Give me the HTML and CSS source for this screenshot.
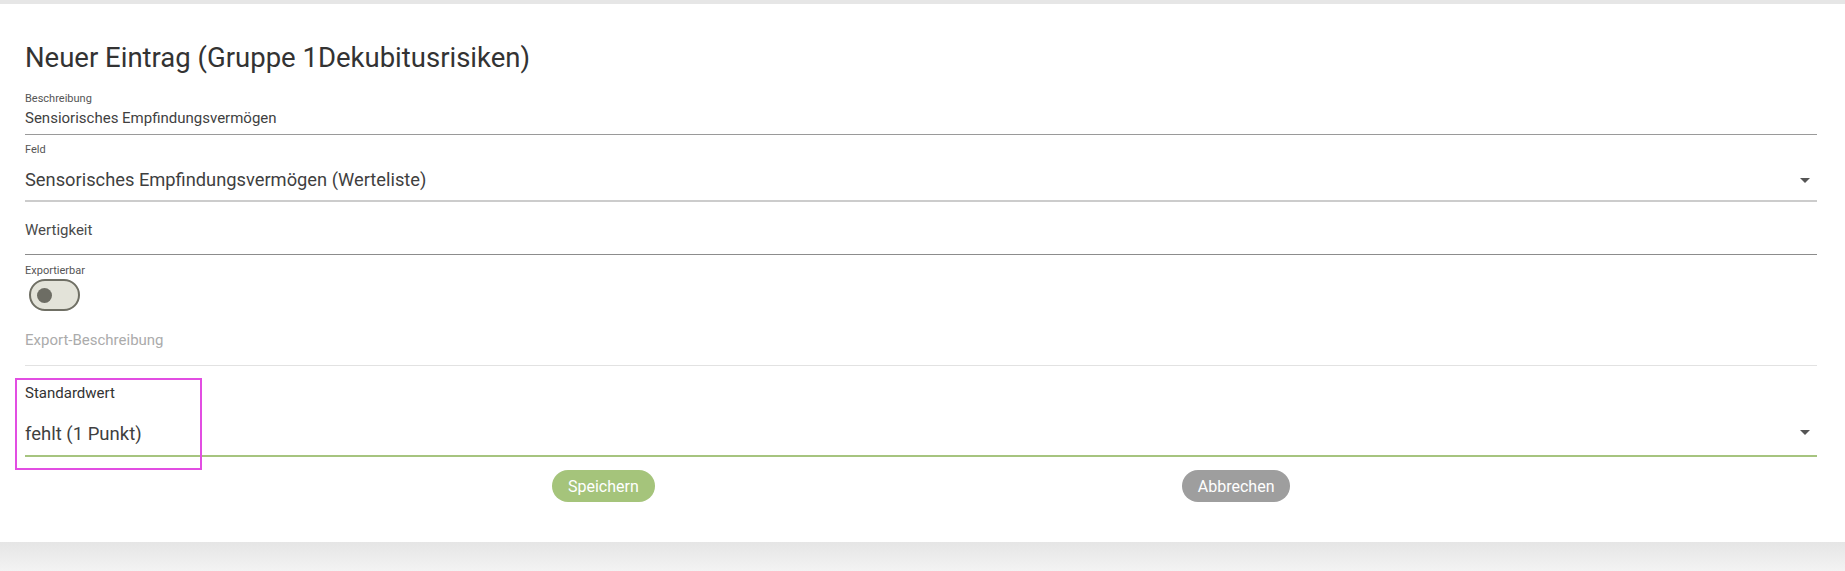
FILE: index.html
```html
<!DOCTYPE html>
<html lang="de">
<head>
<meta charset="utf-8">
<title>Neuer Eintrag</title>
<link rel="stylesheet" href="styles.css">
</head>
<body>
<div class="topbar"></div>
<main class="card">
  <h1 class="title">Neuer Eintrag (Gruppe 1Dekubitusrisiken)</h1>

  <div class="field f-beschreibung">
    <label class="lbl">Beschreibung</label>
    <div class="val val-sm">Sensiorisches Empfindungsvermögen</div>
  </div>

  <div class="field f-feld">
    <label class="lbl">Feld</label>
    <div class="select-row">
      <div class="val val-lg">Sensorisches Empfindungsvermögen (Werteliste)</div>
      <span class="caret"></span>
    </div>
  </div>

  <div class="field f-wert">
    <div class="val val-md">Wertigkeit</div>
  </div>

  <div class="toggle-block">
    <label class="lbl">Exportierbar</label>
    <div class="toggle"><span class="thumb"></span></div>
  </div>

  <div class="field f-export">
    <div class="val val-md placeholder">Export-Beschreibung</div>
  </div>

  <div class="field f-standard">
    <label class="lbl lbl-lg">Standardwert</label>
    <div class="select-row">
      <div class="val val-lg">fehlt (1 Punkt)</div>
      <span class="caret"></span>
    </div>
    <div class="highlight"></div>
  </div>

  <div class="actions">
    <button class="btn btn-save">Speichern</button>
    <button class="btn btn-cancel">Abbrechen</button>
  </div>
</main>
<div class="footer-shade"></div>
</body>
</html>
```
FILE: styles.css
```css
html, body {
  margin: 0;
  padding: 0;
  background: #ffffff;
  font-family: Roboto, "Liberation Sans", Arial, sans-serif;
  color: #444444;
}

.topbar {
  height: 4px;
  background: #e6e6e6;
}

.card {
  padding: 0 28px 40px 25px;
  background: #ffffff;
}

.title {
  margin: 39px 0 0 0;
  font-size: 27.5px;
  line-height: 30px;
  font-weight: 400;
  color: #333333;
}

.field {
  position: relative;
}

.lbl {
  display: block;
  font-size: 11px;
  line-height: 13px;
  color: #555555;
}

.lbl-lg {
  font-size: 15px;
  line-height: 17px;
  color: #333333;
}

.val {
  color: #3f3f3f;
}

.val-sm {
  font-size: 15px;
  line-height: 18px;
}

.val-md {
  font-size: 15px;
  line-height: 17px;
  color: #4a4a4a;
}

.val-lg {
  font-size: 18.5px;
  line-height: 20px;
}

.f-feld .val-lg {
  font-size: 18.3px;
}

.placeholder {
  color: #ababab;
}

.f-beschreibung {
  margin-top: 19px;
  padding-bottom: 7px;
  border-bottom: 1px solid #9a9a9a;
}
.f-beschreibung .val {
  margin-top: 4px;
}

.f-feld {
  margin-top: 8px;
  padding-bottom: 10px;
  border-bottom: 2px solid #cccccc;
}
.f-feld .select-row {
  margin-top: 14px;
}

.select-row {
  display: flex;
  justify-content: space-between;
  align-items: center;
}

.caret {
  width: 0;
  height: 0;
  margin: -4px 7px 0 0;
  border-left: 5px solid transparent;
  border-right: 5px solid transparent;
  border-top: 5px solid #555555;
}

.f-feld .caret {
  margin-top: 0;
}

.f-wert {
  margin-top: 20px;
  padding-bottom: 15px;
  border-bottom: 1px solid #8c8c8c;
}

.toggle-block {
  margin-top: 9px;
}

.toggle {
  box-sizing: border-box;
  width: 51px;
  height: 32px;
  margin: 2px 0 0 4px;
  border: 2px solid #6f6f64;
  border-radius: 16px;
  background: #e3e3d9;
  display: flex;
  align-items: center;
  padding-left: 6px;
}

.thumb {
  width: 15px;
  height: 15px;
  border-radius: 50%;
  background: #6d6d64;
}

.f-export {
  margin-top: 21px;
  padding-bottom: 16px;
  border-bottom: 1px solid #e2e2e2;
}

.f-standard {
  margin-top: 19px;
  padding-bottom: 11px;
  border-bottom: 2px solid #a6c47f;
}
.f-standard .select-row {
  margin-top: 22px;
}

.highlight {
  position: absolute;
  left: -10px;
  top: -7px;
  width: 187px;
  height: 92px;
  box-sizing: border-box;
  border: 2px solid #e24de2;
  pointer-events: none;
}

.actions {
  display: flex;
  gap: 527px;
  margin: 13px 0 0 527px;
}

.btn {
  height: 32px;
  padding: 0 16px;
  border: none;
  border-radius: 16px;
  font-family: Roboto, "Liberation Sans", Arial, sans-serif;
  font-size: 16px;
  color: #ffffff;
  cursor: pointer;
}

.btn-save {
  background: #a5c47b;
}

.btn-cancel {
  background: #9e9e9e;
}

.footer-shade {
  height: 29px;
  background: linear-gradient(#e5e5e5, #f3f3f3);
}
```
